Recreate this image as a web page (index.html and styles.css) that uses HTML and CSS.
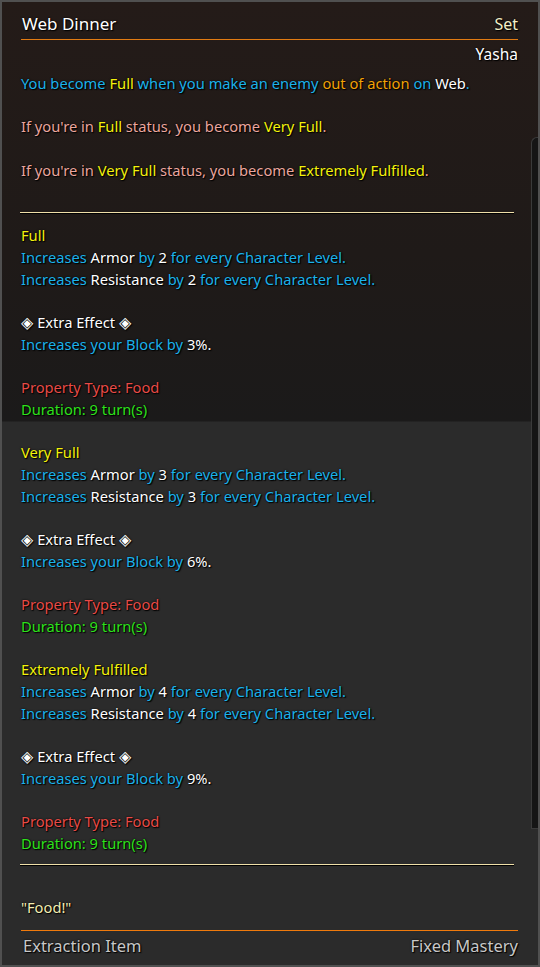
FILE: index.html
```html
<!DOCTYPE html>
<html lang="en">
<head>
<meta charset="utf-8">
<title>Web Dinner</title>
<link rel="stylesheet" href="styles.css">
</head>
<body>
<div class="frame">
  <div class="header">
    <span class="title">Web Dinner</span>
    <span class="set">Set</span>
  </div>
  <div class="owner">Yasha</div>
  <div class="content">
    <p class="line"><span class="b">You become </span><span class="y">Full</span><span class="b"> when you make an enemy </span><span class="o">out of action</span><span class="b"> on </span><span class="w">Web</span><span class="b">.</span></p>
    <p class="line blank"></p>
    <p class="line pk">If you're in <span class="y">Full</span> status, you become <span class="y">Very Full</span>.</p>
    <p class="line blank"></p>
    <p class="line pk">If you're in <span class="y">Very Full</span> status, you become <span class="y">Extremely Fulfilled</span>.</p>
    <hr class="rule rule-top">

    <div class="effect">
      <p class="line y">Full</p>
      <p class="line b">Increases <span class="w">Armor</span> by <span class="w">2</span> for every Character Level.</p>
      <p class="line b">Increases <span class="w">Resistance</span> by <span class="w">2</span> for every Character Level.</p>
      <p class="line blank"></p>
      <p class="line w"><span class="dia">◈</span> Extra Effect <span class="dia">◈</span></p>
      <p class="line b">Increases your Block by <span class="w">3%.</span></p>
      <p class="line blank"></p>
      <p class="line r">Property Type: Food</p>
      <p class="line g">Duration: 9 turn(s)</p>
    </div>

    <div class="effect">
      <p class="line y">Very Full</p>
      <p class="line b">Increases <span class="w">Armor</span> by <span class="w">3</span> for every Character Level.</p>
      <p class="line b">Increases <span class="w">Resistance</span> by <span class="w">3</span> for every Character Level.</p>
      <p class="line blank"></p>
      <p class="line w"><span class="dia">◈</span> Extra Effect <span class="dia">◈</span></p>
      <p class="line b">Increases your Block by <span class="w">6%.</span></p>
      <p class="line blank"></p>
      <p class="line r">Property Type: Food</p>
      <p class="line g">Duration: 9 turn(s)</p>
    </div>

    <div class="effect">
      <p class="line y">Extremely Fulfilled</p>
      <p class="line b">Increases <span class="w">Armor</span> by <span class="w">4</span> for every Character Level.</p>
      <p class="line b">Increases <span class="w">Resistance</span> by <span class="w">4</span> for every Character Level.</p>
      <p class="line blank"></p>
      <p class="line w"><span class="dia">◈</span> Extra Effect <span class="dia">◈</span></p>
      <p class="line b">Increases your Block by <span class="w">9%.</span></p>
      <p class="line blank"></p>
      <p class="line r">Property Type: Food</p>
      <p class="line g">Duration: 9 turn(s)</p>
    </div>
    <hr class="rule rule-bottom">
    <p class="line quote">"Food!"</p>
  </div>
  <div class="footer">
    <span>Extraction Item</span>
    <span>Fixed Mastery</span>
  </div>
  <div class="scrollbar"></div>
</div>
</body>
</html>
```
FILE: styles.css
```css
* { box-sizing: border-box; }
html, body { margin: 0; padding: 0; background: #2b2b2b; }
body {
  font-family: "Noto Sans", "Open Sans", sans-serif;
  font-size: 14.7px;
  color: #ffffff;
}
.frame {
  position: relative;
  width: 540px;
  height: 967px;
  border: 2px solid #505050;
  padding: 0 20px 0 18px;
  background: linear-gradient(to bottom, #241b18 0px, #1f1a18 250px, #1b1a1a 419px, #2b2b2b 420px, #2b2b2b 100%);
  display: flex;
  flex-direction: column;
  text-shadow: 1px 1px 1px #000, 0 0 2px #000;
}
.header {
  display: flex;
  justify-content: space-between;
  align-items: baseline;
  padding-top: 10px;
  padding-left: 1px;
  margin-left: 1px;
  border-bottom: 1px solid #e27b12;
  height: 38px;
}
.title { font-size: 17px; line-height: 24px; color: #ffffff; }
.set { font-size: 16px; line-height: 24px; color: #f2eec6; }
.owner {
  text-align: right;
  font-size: 15.5px;
  line-height: 22px;
  margin-top: 3px;
  color: #ffffff;
}
.content {
  margin-top: 8px;
  padding-right: 4px;
  padding-left: 1px;
}
.line {
  margin: 0;
  line-height: 21.7px;
  min-height: 21.7px;
  white-space: nowrap;
}
.rule {
  border: 0;
  height: 1px;
  background: #efdfa8;
  box-shadow: 0 1px 0 #000;
  margin: 0 0 0 -1px;
}
.rule-top { margin-top: 31px; margin-bottom: 12px; }
.rule-bottom { margin-top: 9px; margin-bottom: 32px; }
.effect + .effect { margin-top: 21.7px; }
.b { color: #1cb2ea; }
.y { color: #f4f20c; }
.o { color: #f2a206; }
.w { color: #ffffff; }
.pk { color: #eba69e; }
.r { color: #e84b47; }
.g { color: #2ee21c; }
.quote { color: #f4eeb2; }
.dia { font-family: "DejaVu Sans", sans-serif; font-size: 16px; line-height: 1; }
.footer {
  margin-top: auto;
  border-top: 1px solid #f07a0c;
  display: flex;
  justify-content: space-between;
  padding: 3px 0 8px 2px;
  margin-left: 1px;
  font-size: 16.5px;
  line-height: 23px;
  color: #c8c8c8;
}
.scrollbar {
  position: absolute;
  top: 135px;
  right: 0;
  width: 7px;
  height: 692px;
  background: #151515;
  border-left: 1px solid #3a3a3a;
  border-top: 1px solid #3a3a3a;
  border-bottom: 1px solid #3a3a3a;
  border-top-left-radius: 6px;
}
```
